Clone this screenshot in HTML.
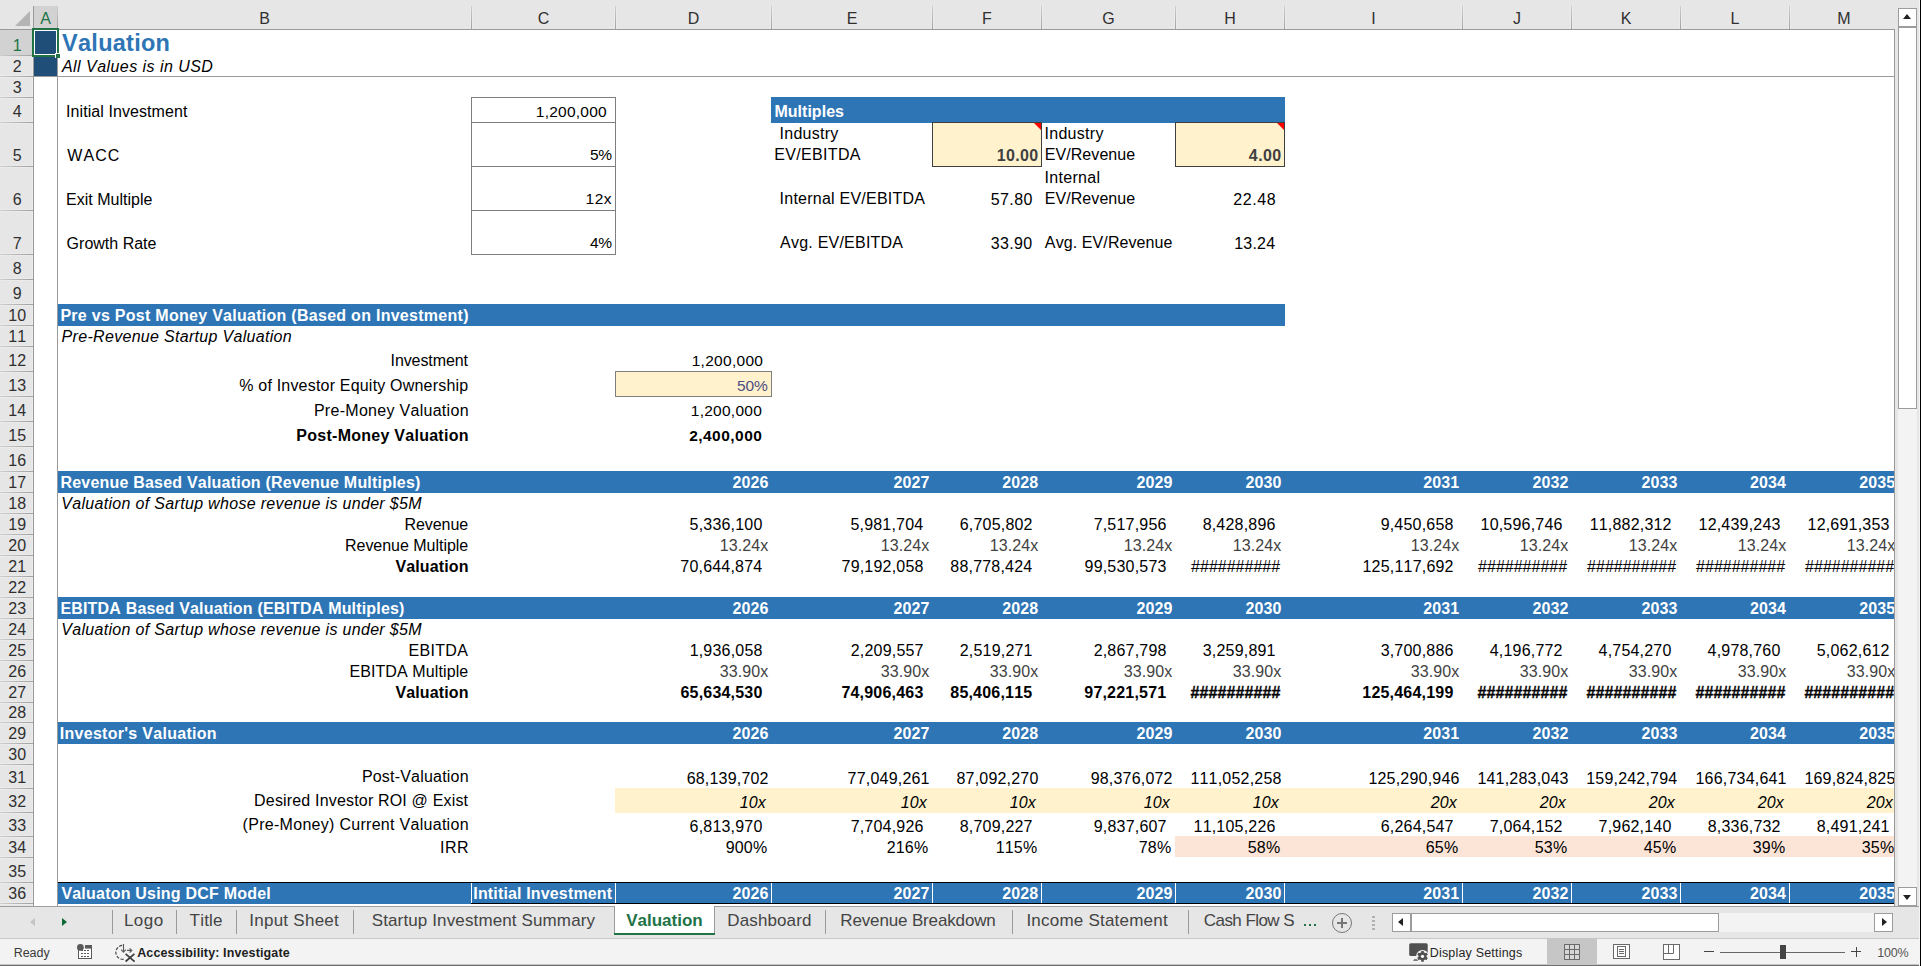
<!DOCTYPE html>
<html><head><meta charset="utf-8"><title>Valuation</title><style>
html,body{margin:0;padding:0}
body{width:1921px;height:966px;position:relative;overflow:hidden;background:#E6E6E6;font-family:"Liberation Sans", sans-serif;}
body div{position:absolute;}
.t{white-space:pre;line-height:20px;height:20px;font-kerning:none;font-variant-ligatures:none;}
</style></head><body>
<div id="sheet" style="left:0;top:0;width:1894px;height:906px;overflow:hidden;background:#fff">
<div style="left:34px;top:30px;width:24px;height:46px;background:#1F4E79;"></div>
<div style="left:771px;top:97px;width:514px;height:26px;background:#2E75B6;"></div>
<div style="left:932px;top:122px;width:110px;height:45px;background:#FFF2CC;"></div>
<div style="left:932px;top:122px;width:110px;height:45px;background:transparent;border:1px solid #3f3f3f;box-sizing:border-box;"></div>
<div style="left:1034px;top:123px;width:0;height:0;border-top:7px solid #FF0000;border-left:7px solid transparent;"></div>
<div style="left:1175px;top:122px;width:110px;height:45px;background:#FFF2CC;"></div>
<div style="left:1175px;top:122px;width:110px;height:45px;background:transparent;border:1px solid #3f3f3f;box-sizing:border-box;"></div>
<div style="left:1277px;top:123px;width:0;height:0;border-top:7px solid #FF0000;border-left:7px solid transparent;"></div>
<div style="left:471px;top:97px;width:145px;height:158px;background:transparent;border:1px solid #7f7f7f;box-sizing:border-box;"></div>
<div style="left:471px;top:122px;width:145px;height:1px;background:#7f7f7f;"></div>
<div style="left:471px;top:166px;width:145px;height:1px;background:#7f7f7f;"></div>
<div style="left:471px;top:210px;width:145px;height:1px;background:#7f7f7f;"></div>
<div style="left:57px;top:304px;width:1228px;height:22px;background:#2E75B6;"></div>
<div style="left:57px;top:471px;width:1842px;height:22px;background:#2E75B6;"></div>
<div style="left:57px;top:597px;width:1842px;height:22px;background:#2E75B6;"></div>
<div style="left:57px;top:722px;width:1842px;height:22px;background:#2E75B6;"></div>
<div style="left:57px;top:882px;width:1842px;height:22px;background:#2E75B6;"></div>
<div style="left:58px;top:882px;width:1836px;height:1px;background:#000;"></div>
<div style="left:471px;top:903px;width:1423px;height:1px;background:#000;"></div>
<div style="left:471px;top:883px;width:1px;height:20px;background:#fff;"></div>
<div style="left:615px;top:883px;width:1px;height:20px;background:#fff;"></div>
<div style="left:771px;top:883px;width:1px;height:20px;background:#fff;"></div>
<div style="left:932px;top:883px;width:1px;height:20px;background:#fff;"></div>
<div style="left:1041px;top:883px;width:1px;height:20px;background:#fff;"></div>
<div style="left:1175px;top:883px;width:1px;height:20px;background:#fff;"></div>
<div style="left:1284px;top:883px;width:1px;height:20px;background:#fff;"></div>
<div style="left:1462px;top:883px;width:1px;height:20px;background:#fff;"></div>
<div style="left:1571px;top:883px;width:1px;height:20px;background:#fff;"></div>
<div style="left:1680px;top:883px;width:1px;height:20px;background:#fff;"></div>
<div style="left:1789px;top:883px;width:1px;height:20px;background:#fff;"></div>
<div style="left:615px;top:371px;width:157px;height:26px;background:#FFF2CC;"></div>
<div style="left:615px;top:371px;width:157px;height:26px;background:transparent;border:1px solid #7f7f7f;box-sizing:border-box;"></div>
<div style="left:615px;top:788px;width:1284px;height:25px;background:#FFF2CC;"></div>
<div style="left:1175px;top:836px;width:719px;height:21px;background:#FCE4D6;"></div>
<div style="left:57px;top:30px;width:1px;height:876px;background:#9b9b9b;"></div>
<div style="left:0px;top:76px;width:1894px;height:1px;background:#9b9b9b;"></div>
<div class="t" style="top:33px;font-size:23.5px;color:#2E75B6;font-weight:bold;letter-spacing:0.263px;left:62.09px;">Valuation</div>
<div class="t" style="top:57px;font-size:16px;font-style:italic;letter-spacing:0.45px;left:61.99px;">All Values is in USD</div>
<div class="t" style="top:102px;font-size:16px;letter-spacing:0.076px;left:66.02px;">Initial Investment</div>
<div class="t" style="top:146px;font-size:16px;letter-spacing:1.032px;left:67.33px;">WACC</div>
<div class="t" style="top:190px;font-size:16px;letter-spacing:0.006px;left:66.09px;">Exit Multiple</div>
<div class="t" style="top:234px;font-size:16px;letter-spacing:0.005px;left:66.6px;">Growth Rate</div>
<div class="t" style="top:102px;font-size:15.5px;letter-spacing:0.241px;left:535.82px;">1,200,000</div>
<div class="t" style="top:145px;font-size:15.5px;letter-spacing:-0.529px;left:590.08px;">5%</div>
<div class="t" style="top:189px;font-size:15.5px;letter-spacing:0.528px;left:585.52px;">12x</div>
<div class="t" style="top:233px;font-size:15.5px;letter-spacing:-0.494px;left:590.04px;">4%</div>
<div class="t" style="top:102px;font-size:16px;color:#fff;font-weight:bold;letter-spacing:0.024px;left:774.43px;">Multiples</div>
<div class="t" style="top:124px;font-size:16px;letter-spacing:0.242px;left:779.62px;">Industry</div>
<div class="t" style="top:145px;font-size:16px;letter-spacing:0.346px;left:774.19px;">EV/EBITDA</div>
<div class="t" style="top:146px;font-size:16px;color:#3f3f3f;font-weight:bold;letter-spacing:0.356px;left:996.79px;">10.00</div>
<div class="t" style="top:124px;font-size:16px;letter-spacing:0.285px;left:1044.52px;">Industry</div>
<div class="t" style="top:145px;font-size:16px;letter-spacing:0.076px;left:1044.69px;">EV/Revenue</div>
<div class="t" style="top:146px;font-size:16px;color:#3f3f3f;font-weight:bold;letter-spacing:0.419px;left:1248.86px;">4.00</div>
<div class="t" style="top:189px;font-size:16px;letter-spacing:0.236px;left:779.62px;">Internal EV/EBITDA</div>
<div class="t" style="top:190px;font-size:16px;letter-spacing:0.407px;left:990.76px;">57.80</div>
<div class="t" style="top:168px;font-size:16px;letter-spacing:0.311px;left:1044.52px;">Internal</div>
<div class="t" style="top:189px;font-size:16px;letter-spacing:0.076px;left:1044.69px;">EV/Revenue</div>
<div class="t" style="top:190px;font-size:16px;letter-spacing:0.59px;left:1233.2px;">22.48</div>
<div class="t" style="top:233px;font-size:16px;letter-spacing:0.225px;left:780.07px;">Avg. EV/EBITDA</div>
<div class="t" style="top:234px;font-size:16px;letter-spacing:0.349px;left:990.79px;">33.90</div>
<div class="t" style="top:233px;font-size:16px;letter-spacing:0.096px;left:1044.87px;">Avg. EV/Revenue</div>
<div class="t" style="top:234px;font-size:16px;letter-spacing:0.212px;left:1234.18px;">13.24</div>
<div class="t" style="top:306px;font-size:16px;color:#fff;font-weight:bold;letter-spacing:0.277px;left:60.43px;">Pre vs Post Money Valuation (Based on Investment)</div>
<div class="t" style="top:327px;font-size:16px;font-style:italic;letter-spacing:0.309px;left:61.61px;">Pre-Revenue Startup Valuation</div>
<div class="t" style="top:351px;font-size:16px;letter-spacing:-0.085px;left:390.52px;">Investment</div>
<div class="t" style="top:351px;font-size:15.5px;letter-spacing:0.279px;left:691.72px;">1,200,000</div>
<div class="t" style="top:376px;font-size:16px;letter-spacing:0.198px;left:239.23px;">% of Investor Equity Ownership</div>
<div class="t" style="top:376px;font-size:15.5px;color:#4e4e82;letter-spacing:-0.125px;left:736.98px;">50%</div>
<div class="t" style="top:401px;font-size:16px;letter-spacing:0.291px;left:313.89px;">Pre-Money Valuation</div>
<div class="t" style="top:401px;font-size:15.5px;letter-spacing:0.254px;left:690.82px;">1,200,000</div>
<div class="t" style="top:426px;font-size:16px;font-weight:bold;letter-spacing:0.265px;left:296.33px;">Post-Money Valuation</div>
<div class="t" style="top:426px;font-size:15.5px;font-weight:bold;letter-spacing:0.465px;left:689.16px;">2,400,000</div>
<div class="t" style="top:473px;font-size:16px;color:#fff;font-weight:bold;letter-spacing:0.209px;left:60.43px;">Revenue Based Valuation (Revenue Multiples)</div>
<div class="t" style="top:473px;font-size:16px;color:#fff;font-weight:bold;letter-spacing:0.1px;right:1125.62px;">2026</div>
<div class="t" style="top:473px;font-size:16px;color:#fff;font-weight:bold;letter-spacing:0.1px;right:964.5px;">2027</div>
<div class="t" style="top:473px;font-size:16px;color:#fff;font-weight:bold;letter-spacing:0.1px;right:855.71px;">2028</div>
<div class="t" style="top:473px;font-size:16px;color:#fff;font-weight:bold;letter-spacing:0.1px;right:721.6099999999999px;">2029</div>
<div class="t" style="top:473px;font-size:16px;color:#fff;font-weight:bold;letter-spacing:0.1px;right:612.54px;">2030</div>
<div class="t" style="top:473px;font-size:16px;color:#fff;font-weight:bold;letter-spacing:0.1px;right:434.75px;">2031</div>
<div class="t" style="top:473px;font-size:16px;color:#fff;font-weight:bold;letter-spacing:0.1px;right:325.55999999999995px;">2032</div>
<div class="t" style="top:473px;font-size:16px;color:#fff;font-weight:bold;letter-spacing:0.1px;right:216.6199999999999px;">2033</div>
<div class="t" style="top:473px;font-size:16px;color:#fff;font-weight:bold;letter-spacing:0.1px;right:108.1099999999999px;">2034</div>
<div class="t" style="top:473px;font-size:16px;color:#fff;font-weight:bold;letter-spacing:0.1px;right:-1.25px;">2035</div>
<div class="t" style="top:494px;font-size:16px;font-style:italic;letter-spacing:0.318px;left:61.22px;">Valuation of Sartup whose revenue is under $5M</div>
<div class="t" style="top:515px;font-size:16px;letter-spacing:-0.054px;left:404.49px;">Revenue</div>
<div class="t" style="top:515px;font-size:16px;letter-spacing:0.2px;right:1131.47px;">5,336,100</div>
<div class="t" style="top:515px;font-size:16px;letter-spacing:0.2px;right:970.63px;">5,981,704</div>
<div class="t" style="top:515px;font-size:16px;letter-spacing:0.2px;right:861.3px;">6,705,802</div>
<div class="t" style="top:515px;font-size:16px;letter-spacing:0.2px;right:727.4000000000001px;">7,517,956</div>
<div class="t" style="top:515px;font-size:16px;letter-spacing:0.2px;right:618.4000000000001px;">8,428,896</div>
<div class="t" style="top:515px;font-size:16px;letter-spacing:0.2px;right:440.4000000000001px;">9,450,658</div>
<div class="t" style="top:515px;font-size:16px;letter-spacing:0.2px;right:331.4000000000001px;">10,596,746</div>
<div class="t" style="top:515px;font-size:16px;letter-spacing:0.2px;right:222.29999999999995px;">11,882,312</div>
<div class="t" style="top:515px;font-size:16px;letter-spacing:0.2px;right:113.40000000000009px;">12,439,243</div>
<div class="t" style="top:515px;font-size:16px;letter-spacing:0.2px;right:4.400000000000091px;">12,691,353</div>
<div class="t" style="top:536px;font-size:16px;letter-spacing:-0.027px;left:344.99px;">Revenue Multiple</div>
<div class="t" style="top:536px;font-size:16px;color:#424242;letter-spacing:0.08px;right:1125.75px;">13.24x</div>
<div class="t" style="top:536px;font-size:16px;color:#424242;letter-spacing:0.08px;right:964.75px;">13.24x</div>
<div class="t" style="top:536px;font-size:16px;color:#424242;letter-spacing:0.08px;right:855.75px;">13.24x</div>
<div class="t" style="top:536px;font-size:16px;color:#424242;letter-spacing:0.08px;right:721.75px;">13.24x</div>
<div class="t" style="top:536px;font-size:16px;color:#424242;letter-spacing:0.08px;right:612.75px;">13.24x</div>
<div class="t" style="top:536px;font-size:16px;color:#424242;letter-spacing:0.08px;right:434.75px;">13.24x</div>
<div class="t" style="top:536px;font-size:16px;color:#424242;letter-spacing:0.08px;right:325.75px;">13.24x</div>
<div class="t" style="top:536px;font-size:16px;color:#424242;letter-spacing:0.08px;right:216.75px;">13.24x</div>
<div class="t" style="top:536px;font-size:16px;color:#424242;letter-spacing:0.08px;right:107.75px;">13.24x</div>
<div class="t" style="top:536px;font-size:16px;color:#424242;letter-spacing:0.08px;right:-1.25px;">13.24x</div>
<div class="t" style="top:557px;font-size:16px;font-weight:bold;letter-spacing:0.137px;left:395.39px;">Valuation</div>
<div class="t" style="top:557px;font-size:16px;letter-spacing:0.2px;right:1131.63px;">70,644,874</div>
<div class="t" style="top:557px;font-size:16px;letter-spacing:0.2px;right:970.4px;">79,192,058</div>
<div class="t" style="top:557px;font-size:16px;letter-spacing:0.2px;right:861.6300000000001px;">88,778,424</div>
<div class="t" style="top:557px;font-size:16px;letter-spacing:0.2px;right:727.4000000000001px;">99,530,573</div>
<div class="t" style="top:557px;font-size:16px;letter-spacing:0px;right:613.9200000000001px;">##########</div>
<div class="t" style="top:557px;font-size:16px;letter-spacing:0.2px;right:440.29999999999995px;">125,117,692</div>
<div class="t" style="top:557px;font-size:16px;letter-spacing:0px;right:326.9200000000001px;">##########</div>
<div class="t" style="top:557px;font-size:16px;letter-spacing:0px;right:217.92000000000007px;">##########</div>
<div class="t" style="top:557px;font-size:16px;letter-spacing:0px;right:108.92000000000007px;">##########</div>
<div class="t" style="top:557px;font-size:16px;letter-spacing:0px;right:-0.07999999999992724px;">##########</div>
<div class="t" style="top:599px;font-size:16px;color:#fff;font-weight:bold;letter-spacing:0.176px;left:60.43px;">EBITDA Based Valuation (EBITDA Multiples)</div>
<div class="t" style="top:599px;font-size:16px;color:#fff;font-weight:bold;letter-spacing:0.1px;right:1125.62px;">2026</div>
<div class="t" style="top:599px;font-size:16px;color:#fff;font-weight:bold;letter-spacing:0.1px;right:964.5px;">2027</div>
<div class="t" style="top:599px;font-size:16px;color:#fff;font-weight:bold;letter-spacing:0.1px;right:855.71px;">2028</div>
<div class="t" style="top:599px;font-size:16px;color:#fff;font-weight:bold;letter-spacing:0.1px;right:721.6099999999999px;">2029</div>
<div class="t" style="top:599px;font-size:16px;color:#fff;font-weight:bold;letter-spacing:0.1px;right:612.54px;">2030</div>
<div class="t" style="top:599px;font-size:16px;color:#fff;font-weight:bold;letter-spacing:0.1px;right:434.75px;">2031</div>
<div class="t" style="top:599px;font-size:16px;color:#fff;font-weight:bold;letter-spacing:0.1px;right:325.55999999999995px;">2032</div>
<div class="t" style="top:599px;font-size:16px;color:#fff;font-weight:bold;letter-spacing:0.1px;right:216.6199999999999px;">2033</div>
<div class="t" style="top:599px;font-size:16px;color:#fff;font-weight:bold;letter-spacing:0.1px;right:108.1099999999999px;">2034</div>
<div class="t" style="top:599px;font-size:16px;color:#fff;font-weight:bold;letter-spacing:0.1px;right:-1.25px;">2035</div>
<div class="t" style="top:620px;font-size:16px;font-style:italic;letter-spacing:0.318px;left:61.22px;">Valuation of Sartup whose revenue is under $5M</div>
<div class="t" style="top:641px;font-size:16px;letter-spacing:0.351px;left:408.39px;">EBITDA</div>
<div class="t" style="top:641px;font-size:16px;letter-spacing:0.2px;right:1131.4px;">1,936,058</div>
<div class="t" style="top:641px;font-size:16px;letter-spacing:0.2px;right:970.3px;">2,209,557</div>
<div class="t" style="top:641px;font-size:16px;letter-spacing:0.2px;right:861.3199999999999px;">2,519,271</div>
<div class="t" style="top:641px;font-size:16px;letter-spacing:0.2px;right:727.4000000000001px;">2,867,798</div>
<div class="t" style="top:641px;font-size:16px;letter-spacing:0.2px;right:618.3199999999999px;">3,259,891</div>
<div class="t" style="top:641px;font-size:16px;letter-spacing:0.2px;right:440.4000000000001px;">3,700,886</div>
<div class="t" style="top:641px;font-size:16px;letter-spacing:0.2px;right:331.29999999999995px;">4,196,772</div>
<div class="t" style="top:641px;font-size:16px;letter-spacing:0.2px;right:222.47000000000003px;">4,754,270</div>
<div class="t" style="top:641px;font-size:16px;letter-spacing:0.2px;right:113.47000000000003px;">4,978,760</div>
<div class="t" style="top:641px;font-size:16px;letter-spacing:0.2px;right:4.2999999999999545px;">5,062,612</div>
<div class="t" style="top:662px;font-size:16px;letter-spacing:0.104px;left:349.39px;">EBITDA Multiple</div>
<div class="t" style="top:662px;font-size:16px;color:#424242;letter-spacing:0.08px;right:1125.75px;">33.90x</div>
<div class="t" style="top:662px;font-size:16px;color:#424242;letter-spacing:0.08px;right:964.75px;">33.90x</div>
<div class="t" style="top:662px;font-size:16px;color:#424242;letter-spacing:0.08px;right:855.75px;">33.90x</div>
<div class="t" style="top:662px;font-size:16px;color:#424242;letter-spacing:0.08px;right:721.75px;">33.90x</div>
<div class="t" style="top:662px;font-size:16px;color:#424242;letter-spacing:0.08px;right:612.75px;">33.90x</div>
<div class="t" style="top:662px;font-size:16px;color:#424242;letter-spacing:0.08px;right:434.75px;">33.90x</div>
<div class="t" style="top:662px;font-size:16px;color:#424242;letter-spacing:0.08px;right:325.75px;">33.90x</div>
<div class="t" style="top:662px;font-size:16px;color:#424242;letter-spacing:0.08px;right:216.75px;">33.90x</div>
<div class="t" style="top:662px;font-size:16px;color:#424242;letter-spacing:0.08px;right:107.75px;">33.90x</div>
<div class="t" style="top:662px;font-size:16px;color:#424242;letter-spacing:0.08px;right:-1.25px;">33.90x</div>
<div class="t" style="top:683px;font-size:16px;font-weight:bold;letter-spacing:0.137px;left:395.39px;">Valuation</div>
<div class="t" style="top:683px;font-size:16px;font-weight:bold;letter-spacing:0.2px;right:1131.44px;">65,634,530</div>
<div class="t" style="top:683px;font-size:16px;font-weight:bold;letter-spacing:0.2px;right:970.52px;">74,906,463</div>
<div class="t" style="top:683px;font-size:16px;font-weight:bold;letter-spacing:0.2px;right:861.6500000000001px;">85,406,115</div>
<div class="t" style="top:683px;font-size:16px;font-weight:bold;letter-spacing:0.2px;right:727.6500000000001px;">97,221,571</div>
<div class="t" style="top:683px;font-size:16px;font-weight:bold;letter-spacing:0.1px;right:613.6400000000001px;-webkit-text-stroke:0.35px #000;">##########</div>
<div class="t" style="top:683px;font-size:16px;font-weight:bold;letter-spacing:0.2px;right:440.51px;">125,464,199</div>
<div class="t" style="top:683px;font-size:16px;font-weight:bold;letter-spacing:0.1px;right:326.6400000000001px;-webkit-text-stroke:0.35px #000;">##########</div>
<div class="t" style="top:683px;font-size:16px;font-weight:bold;letter-spacing:0.1px;right:217.6400000000001px;-webkit-text-stroke:0.35px #000;">##########</div>
<div class="t" style="top:683px;font-size:16px;font-weight:bold;letter-spacing:0.1px;right:108.6400000000001px;-webkit-text-stroke:0.35px #000;">##########</div>
<div class="t" style="top:683px;font-size:16px;font-weight:bold;letter-spacing:0.1px;right:-0.35999999999989996px;-webkit-text-stroke:0.35px #000;">##########</div>
<div class="t" style="top:724px;font-size:16px;color:#fff;font-weight:bold;letter-spacing:0.288px;left:59.73px;">Investor's Valuation</div>
<div class="t" style="top:724px;font-size:16px;color:#fff;font-weight:bold;letter-spacing:0.1px;right:1125.62px;">2026</div>
<div class="t" style="top:724px;font-size:16px;color:#fff;font-weight:bold;letter-spacing:0.1px;right:964.5px;">2027</div>
<div class="t" style="top:724px;font-size:16px;color:#fff;font-weight:bold;letter-spacing:0.1px;right:855.71px;">2028</div>
<div class="t" style="top:724px;font-size:16px;color:#fff;font-weight:bold;letter-spacing:0.1px;right:721.6099999999999px;">2029</div>
<div class="t" style="top:724px;font-size:16px;color:#fff;font-weight:bold;letter-spacing:0.1px;right:612.54px;">2030</div>
<div class="t" style="top:724px;font-size:16px;color:#fff;font-weight:bold;letter-spacing:0.1px;right:434.75px;">2031</div>
<div class="t" style="top:724px;font-size:16px;color:#fff;font-weight:bold;letter-spacing:0.1px;right:325.55999999999995px;">2032</div>
<div class="t" style="top:724px;font-size:16px;color:#fff;font-weight:bold;letter-spacing:0.1px;right:216.6199999999999px;">2033</div>
<div class="t" style="top:724px;font-size:16px;color:#fff;font-weight:bold;letter-spacing:0.1px;right:108.1099999999999px;">2034</div>
<div class="t" style="top:724px;font-size:16px;color:#fff;font-weight:bold;letter-spacing:0.1px;right:-1.25px;">2035</div>
<div class="t" style="top:767px;font-size:16px;letter-spacing:0.199px;left:361.89px;">Post-Valuation</div>
<div class="t" style="top:769px;font-size:16px;letter-spacing:0.2px;right:1125.3px;">68,139,702</div>
<div class="t" style="top:769px;font-size:16px;letter-spacing:0.2px;right:964.32px;">77,049,261</div>
<div class="t" style="top:769px;font-size:16px;letter-spacing:0.2px;right:855.47px;">87,092,270</div>
<div class="t" style="top:769px;font-size:16px;letter-spacing:0.2px;right:721.3px;">98,376,072</div>
<div class="t" style="top:769px;font-size:16px;letter-spacing:0.2px;right:612.4000000000001px;">111,052,258</div>
<div class="t" style="top:769px;font-size:16px;letter-spacing:0.2px;right:434.4000000000001px;">125,290,946</div>
<div class="t" style="top:769px;font-size:16px;letter-spacing:0.2px;right:325.4000000000001px;">141,283,043</div>
<div class="t" style="top:769px;font-size:16px;letter-spacing:0.2px;right:216.6300000000001px;">159,242,794</div>
<div class="t" style="top:769px;font-size:16px;letter-spacing:0.2px;right:107.31999999999994px;">166,734,641</div>
<div class="t" style="top:769px;font-size:16px;letter-spacing:0.2px;right:-1.5699999999999363px;">169,824,825</div>
<div class="t" style="top:791px;font-size:16px;letter-spacing:0.176px;left:254.09px;">Desired Investor ROI @ Exist</div>
<div class="t" style="top:793px;font-size:16px;font-style:italic;letter-spacing:0.2px;right:1127.97px;">10x</div>
<div class="t" style="top:793px;font-size:16px;font-style:italic;letter-spacing:0.2px;right:966.97px;">10x</div>
<div class="t" style="top:793px;font-size:16px;font-style:italic;letter-spacing:0.2px;right:857.97px;">10x</div>
<div class="t" style="top:793px;font-size:16px;font-style:italic;letter-spacing:0.2px;right:723.97px;">10x</div>
<div class="t" style="top:793px;font-size:16px;font-style:italic;letter-spacing:0.2px;right:614.97px;">10x</div>
<div class="t" style="top:793px;font-size:16px;font-style:italic;letter-spacing:0.2px;right:436.97px;">20x</div>
<div class="t" style="top:793px;font-size:16px;font-style:italic;letter-spacing:0.2px;right:327.97px;">20x</div>
<div class="t" style="top:793px;font-size:16px;font-style:italic;letter-spacing:0.2px;right:218.97000000000003px;">20x</div>
<div class="t" style="top:793px;font-size:16px;font-style:italic;letter-spacing:0.2px;right:109.97000000000003px;">20x</div>
<div class="t" style="top:793px;font-size:16px;font-style:italic;letter-spacing:0.2px;right:0.9700000000000273px;">20x</div>
<div class="t" style="top:815px;font-size:16px;letter-spacing:0.288px;left:242.61px;">(Pre-Money) Current Valuation</div>
<div class="t" style="top:817px;font-size:16px;letter-spacing:0.2px;right:1131.47px;">6,813,970</div>
<div class="t" style="top:817px;font-size:16px;letter-spacing:0.2px;right:970.4px;">7,704,926</div>
<div class="t" style="top:817px;font-size:16px;letter-spacing:0.2px;right:861.3px;">8,709,227</div>
<div class="t" style="top:817px;font-size:16px;letter-spacing:0.2px;right:727.3px;">9,837,607</div>
<div class="t" style="top:817px;font-size:16px;letter-spacing:0.2px;right:618.4000000000001px;">11,105,226</div>
<div class="t" style="top:817px;font-size:16px;letter-spacing:0.2px;right:440.29999999999995px;">6,264,547</div>
<div class="t" style="top:817px;font-size:16px;letter-spacing:0.2px;right:331.29999999999995px;">7,064,152</div>
<div class="t" style="top:817px;font-size:16px;letter-spacing:0.2px;right:222.47000000000003px;">7,962,140</div>
<div class="t" style="top:817px;font-size:16px;letter-spacing:0.2px;right:113.29999999999995px;">8,336,732</div>
<div class="t" style="top:817px;font-size:16px;letter-spacing:0.2px;right:4.319999999999936px;">8,491,241</div>
<div class="t" style="top:838px;font-size:16px;letter-spacing:0.582px;left:439.92px;">IRR</div>
<div class="t" style="top:838px;font-size:16px;letter-spacing:0.2px;right:1126.63px;">900%</div>
<div class="t" style="top:838px;font-size:16px;letter-spacing:0.2px;right:965.63px;">216%</div>
<div class="t" style="top:838px;font-size:16px;letter-spacing:0.2px;right:856.6300000000001px;">115%</div>
<div class="t" style="top:838px;font-size:16px;letter-spacing:0.2px;right:722.6300000000001px;">78%</div>
<div class="t" style="top:838px;font-size:16px;letter-spacing:0.2px;right:613.6300000000001px;">58%</div>
<div class="t" style="top:838px;font-size:16px;letter-spacing:0.2px;right:435.6300000000001px;">65%</div>
<div class="t" style="top:838px;font-size:16px;letter-spacing:0.2px;right:326.6300000000001px;">53%</div>
<div class="t" style="top:838px;font-size:16px;letter-spacing:0.2px;right:217.6300000000001px;">45%</div>
<div class="t" style="top:838px;font-size:16px;letter-spacing:0.2px;right:108.63000000000011px;">39%</div>
<div class="t" style="top:838px;font-size:16px;letter-spacing:0.2px;right:-0.36999999999989086px;">35%</div>
<div class="t" style="top:884px;font-size:16px;color:#fff;font-weight:bold;letter-spacing:0.213px;left:61.39px;">Valuaton Using DCF Model</div>
<div class="t" style="top:884px;font-size:16px;color:#fff;font-weight:bold;letter-spacing:0.152px;left:473.33px;">Intitial Investment</div>
<div class="t" style="top:884px;font-size:16px;color:#fff;font-weight:bold;letter-spacing:0.1px;right:1125.62px;">2026</div>
<div class="t" style="top:884px;font-size:16px;color:#fff;font-weight:bold;letter-spacing:0.1px;right:964.5px;">2027</div>
<div class="t" style="top:884px;font-size:16px;color:#fff;font-weight:bold;letter-spacing:0.1px;right:855.71px;">2028</div>
<div class="t" style="top:884px;font-size:16px;color:#fff;font-weight:bold;letter-spacing:0.1px;right:721.6099999999999px;">2029</div>
<div class="t" style="top:884px;font-size:16px;color:#fff;font-weight:bold;letter-spacing:0.1px;right:612.54px;">2030</div>
<div class="t" style="top:884px;font-size:16px;color:#fff;font-weight:bold;letter-spacing:0.1px;right:434.75px;">2031</div>
<div class="t" style="top:884px;font-size:16px;color:#fff;font-weight:bold;letter-spacing:0.1px;right:325.55999999999995px;">2032</div>
<div class="t" style="top:884px;font-size:16px;color:#fff;font-weight:bold;letter-spacing:0.1px;right:216.6199999999999px;">2033</div>
<div class="t" style="top:884px;font-size:16px;color:#fff;font-weight:bold;letter-spacing:0.1px;right:108.1099999999999px;">2034</div>
<div class="t" style="top:884px;font-size:16px;color:#fff;font-weight:bold;letter-spacing:0.1px;right:-1.25px;">2035</div>
<div style="left:32px;top:28px;width:27px;height:29px;background:transparent;border:2px solid #217346;box-sizing:border-box;"></div>
<div style="left:34px;top:30px;width:23px;height:25px;background:transparent;border:1px solid #fff;box-sizing:border-box;"></div>
<div style="left:55px;top:53px;width:5px;height:5px;background:#fff;"></div>
<div style="left:56px;top:54px;width:4px;height:4px;background:#217346;"></div>
</div>
<div style="left:0px;top:0px;width:1895px;height:29px;background:#E6E6E6;"></div>
<div style="left:0px;top:30px;width:33px;height:876px;background:#E6E6E6;"></div>
<div style="left:34px;top:6px;width:23px;height:23px;background:#D2D2D2;"></div>
<div style="left:0px;top:30px;width:33px;height:25px;background:#D2D2D2;"></div>
<div style="left:0px;top:29px;width:1895px;height:1px;background:#9a9a9a;"></div>
<div style="left:1894px;top:29px;width:1px;height:877px;background:#9a9a9a;"></div>
<div style="left:33px;top:6px;width:1px;height:900px;background:#9a9a9a;"></div>
<div style="left:57px;top:6px;width:1px;height:23px;background:linear-gradient(#cdcdcd,#a2a2a2);"></div>
<div style="left:470px;top:6px;width:3px;height:23px;background:#ebebeb;"></div>
<div style="left:471px;top:6px;width:1px;height:23px;background:linear-gradient(#cdcdcd,#a2a2a2);"></div>
<div style="left:614px;top:6px;width:3px;height:23px;background:#ebebeb;"></div>
<div style="left:615px;top:6px;width:1px;height:23px;background:linear-gradient(#cdcdcd,#a2a2a2);"></div>
<div style="left:770px;top:6px;width:3px;height:23px;background:#ebebeb;"></div>
<div style="left:771px;top:6px;width:1px;height:23px;background:linear-gradient(#cdcdcd,#a2a2a2);"></div>
<div style="left:931px;top:6px;width:3px;height:23px;background:#ebebeb;"></div>
<div style="left:932px;top:6px;width:1px;height:23px;background:linear-gradient(#cdcdcd,#a2a2a2);"></div>
<div style="left:1040px;top:6px;width:3px;height:23px;background:#ebebeb;"></div>
<div style="left:1041px;top:6px;width:1px;height:23px;background:linear-gradient(#cdcdcd,#a2a2a2);"></div>
<div style="left:1174px;top:6px;width:3px;height:23px;background:#ebebeb;"></div>
<div style="left:1175px;top:6px;width:1px;height:23px;background:linear-gradient(#cdcdcd,#a2a2a2);"></div>
<div style="left:1283px;top:6px;width:3px;height:23px;background:#ebebeb;"></div>
<div style="left:1284px;top:6px;width:1px;height:23px;background:linear-gradient(#cdcdcd,#a2a2a2);"></div>
<div style="left:1461px;top:6px;width:3px;height:23px;background:#ebebeb;"></div>
<div style="left:1462px;top:6px;width:1px;height:23px;background:linear-gradient(#cdcdcd,#a2a2a2);"></div>
<div style="left:1570px;top:6px;width:3px;height:23px;background:#ebebeb;"></div>
<div style="left:1571px;top:6px;width:1px;height:23px;background:linear-gradient(#cdcdcd,#a2a2a2);"></div>
<div style="left:1679px;top:6px;width:3px;height:23px;background:#ebebeb;"></div>
<div style="left:1680px;top:6px;width:1px;height:23px;background:linear-gradient(#cdcdcd,#a2a2a2);"></div>
<div style="left:1788px;top:6px;width:3px;height:23px;background:#ebebeb;"></div>
<div style="left:1789px;top:6px;width:1px;height:23px;background:linear-gradient(#cdcdcd,#a2a2a2);"></div>
<div style="left:32px;top:30px;width:1px;height:876px;background:#ebebeb;"></div>
<div style="left:0px;top:55px;width:33px;height:1px;background:linear-gradient(to right,#cdcdcd,#a0a0a0);"></div>
<div style="left:0px;top:75px;width:33px;height:3px;background:#ebebeb;"></div>
<div style="left:0px;top:76px;width:33px;height:1px;background:linear-gradient(to right,#cdcdcd,#a0a0a0);"></div>
<div style="left:0px;top:96px;width:33px;height:3px;background:#ebebeb;"></div>
<div style="left:0px;top:97px;width:33px;height:1px;background:linear-gradient(to right,#cdcdcd,#a0a0a0);"></div>
<div style="left:0px;top:121px;width:33px;height:3px;background:#ebebeb;"></div>
<div style="left:0px;top:122px;width:33px;height:1px;background:linear-gradient(to right,#cdcdcd,#a0a0a0);"></div>
<div style="left:0px;top:165px;width:33px;height:3px;background:#ebebeb;"></div>
<div style="left:0px;top:166px;width:33px;height:1px;background:linear-gradient(to right,#cdcdcd,#a0a0a0);"></div>
<div style="left:0px;top:209px;width:33px;height:3px;background:#ebebeb;"></div>
<div style="left:0px;top:210px;width:33px;height:1px;background:linear-gradient(to right,#cdcdcd,#a0a0a0);"></div>
<div style="left:0px;top:253px;width:33px;height:3px;background:#ebebeb;"></div>
<div style="left:0px;top:254px;width:33px;height:1px;background:linear-gradient(to right,#cdcdcd,#a0a0a0);"></div>
<div style="left:0px;top:278px;width:33px;height:3px;background:#ebebeb;"></div>
<div style="left:0px;top:279px;width:33px;height:1px;background:linear-gradient(to right,#cdcdcd,#a0a0a0);"></div>
<div style="left:0px;top:303px;width:33px;height:3px;background:#ebebeb;"></div>
<div style="left:0px;top:304px;width:33px;height:1px;background:linear-gradient(to right,#cdcdcd,#a0a0a0);"></div>
<div style="left:0px;top:324px;width:33px;height:3px;background:#ebebeb;"></div>
<div style="left:0px;top:325px;width:33px;height:1px;background:linear-gradient(to right,#cdcdcd,#a0a0a0);"></div>
<div style="left:0px;top:345px;width:33px;height:3px;background:#ebebeb;"></div>
<div style="left:0px;top:346px;width:33px;height:1px;background:linear-gradient(to right,#cdcdcd,#a0a0a0);"></div>
<div style="left:0px;top:370px;width:33px;height:3px;background:#ebebeb;"></div>
<div style="left:0px;top:371px;width:33px;height:1px;background:linear-gradient(to right,#cdcdcd,#a0a0a0);"></div>
<div style="left:0px;top:395px;width:33px;height:3px;background:#ebebeb;"></div>
<div style="left:0px;top:396px;width:33px;height:1px;background:linear-gradient(to right,#cdcdcd,#a0a0a0);"></div>
<div style="left:0px;top:420px;width:33px;height:3px;background:#ebebeb;"></div>
<div style="left:0px;top:421px;width:33px;height:1px;background:linear-gradient(to right,#cdcdcd,#a0a0a0);"></div>
<div style="left:0px;top:445px;width:33px;height:3px;background:#ebebeb;"></div>
<div style="left:0px;top:446px;width:33px;height:1px;background:linear-gradient(to right,#cdcdcd,#a0a0a0);"></div>
<div style="left:0px;top:470px;width:33px;height:3px;background:#ebebeb;"></div>
<div style="left:0px;top:471px;width:33px;height:1px;background:linear-gradient(to right,#cdcdcd,#a0a0a0);"></div>
<div style="left:0px;top:491px;width:33px;height:3px;background:#ebebeb;"></div>
<div style="left:0px;top:492px;width:33px;height:1px;background:linear-gradient(to right,#cdcdcd,#a0a0a0);"></div>
<div style="left:0px;top:512px;width:33px;height:3px;background:#ebebeb;"></div>
<div style="left:0px;top:513px;width:33px;height:1px;background:linear-gradient(to right,#cdcdcd,#a0a0a0);"></div>
<div style="left:0px;top:533px;width:33px;height:3px;background:#ebebeb;"></div>
<div style="left:0px;top:534px;width:33px;height:1px;background:linear-gradient(to right,#cdcdcd,#a0a0a0);"></div>
<div style="left:0px;top:554px;width:33px;height:3px;background:#ebebeb;"></div>
<div style="left:0px;top:555px;width:33px;height:1px;background:linear-gradient(to right,#cdcdcd,#a0a0a0);"></div>
<div style="left:0px;top:575px;width:33px;height:3px;background:#ebebeb;"></div>
<div style="left:0px;top:576px;width:33px;height:1px;background:linear-gradient(to right,#cdcdcd,#a0a0a0);"></div>
<div style="left:0px;top:596px;width:33px;height:3px;background:#ebebeb;"></div>
<div style="left:0px;top:597px;width:33px;height:1px;background:linear-gradient(to right,#cdcdcd,#a0a0a0);"></div>
<div style="left:0px;top:617px;width:33px;height:3px;background:#ebebeb;"></div>
<div style="left:0px;top:618px;width:33px;height:1px;background:linear-gradient(to right,#cdcdcd,#a0a0a0);"></div>
<div style="left:0px;top:638px;width:33px;height:3px;background:#ebebeb;"></div>
<div style="left:0px;top:639px;width:33px;height:1px;background:linear-gradient(to right,#cdcdcd,#a0a0a0);"></div>
<div style="left:0px;top:659px;width:33px;height:3px;background:#ebebeb;"></div>
<div style="left:0px;top:660px;width:33px;height:1px;background:linear-gradient(to right,#cdcdcd,#a0a0a0);"></div>
<div style="left:0px;top:680px;width:33px;height:3px;background:#ebebeb;"></div>
<div style="left:0px;top:681px;width:33px;height:1px;background:linear-gradient(to right,#cdcdcd,#a0a0a0);"></div>
<div style="left:0px;top:701px;width:33px;height:3px;background:#ebebeb;"></div>
<div style="left:0px;top:702px;width:33px;height:1px;background:linear-gradient(to right,#cdcdcd,#a0a0a0);"></div>
<div style="left:0px;top:721px;width:33px;height:3px;background:#ebebeb;"></div>
<div style="left:0px;top:722px;width:33px;height:1px;background:linear-gradient(to right,#cdcdcd,#a0a0a0);"></div>
<div style="left:0px;top:742px;width:33px;height:3px;background:#ebebeb;"></div>
<div style="left:0px;top:743px;width:33px;height:1px;background:linear-gradient(to right,#cdcdcd,#a0a0a0);"></div>
<div style="left:0px;top:763px;width:33px;height:3px;background:#ebebeb;"></div>
<div style="left:0px;top:764px;width:33px;height:1px;background:linear-gradient(to right,#cdcdcd,#a0a0a0);"></div>
<div style="left:0px;top:787px;width:33px;height:3px;background:#ebebeb;"></div>
<div style="left:0px;top:788px;width:33px;height:1px;background:linear-gradient(to right,#cdcdcd,#a0a0a0);"></div>
<div style="left:0px;top:811px;width:33px;height:3px;background:#ebebeb;"></div>
<div style="left:0px;top:812px;width:33px;height:1px;background:linear-gradient(to right,#cdcdcd,#a0a0a0);"></div>
<div style="left:0px;top:835px;width:33px;height:3px;background:#ebebeb;"></div>
<div style="left:0px;top:836px;width:33px;height:1px;background:linear-gradient(to right,#cdcdcd,#a0a0a0);"></div>
<div style="left:0px;top:856px;width:33px;height:3px;background:#ebebeb;"></div>
<div style="left:0px;top:857px;width:33px;height:1px;background:linear-gradient(to right,#cdcdcd,#a0a0a0);"></div>
<div style="left:0px;top:881px;width:33px;height:3px;background:#ebebeb;"></div>
<div style="left:0px;top:882px;width:33px;height:1px;background:linear-gradient(to right,#cdcdcd,#a0a0a0);"></div>
<div style="left:0px;top:902px;width:33px;height:3px;background:#ebebeb;"></div>
<div style="left:0px;top:903px;width:33px;height:1px;background:linear-gradient(to right,#cdcdcd,#a0a0a0);"></div>
<div style="left:15px;top:11px;width:0;height:0;border-bottom:15px solid #b4b4b4;border-left:15px solid transparent;"></div>
<div class="t" style="top:9px;font-size:16px;color:#217346;left:-154.5px;width:400px;text-align:center;">A</div>
<div class="t" style="top:9px;font-size:16px;color:#303030;left:64.5px;width:400px;text-align:center;">B</div>
<div class="t" style="top:9px;font-size:16px;color:#303030;left:343.5px;width:400px;text-align:center;">C</div>
<div class="t" style="top:9px;font-size:16px;color:#303030;left:493.5px;width:400px;text-align:center;">D</div>
<div class="t" style="top:9px;font-size:16px;color:#303030;left:652.0px;width:400px;text-align:center;">E</div>
<div class="t" style="top:9px;font-size:16px;color:#303030;left:787.0px;width:400px;text-align:center;">F</div>
<div class="t" style="top:9px;font-size:16px;color:#303030;left:908.5px;width:400px;text-align:center;">G</div>
<div class="t" style="top:9px;font-size:16px;color:#303030;left:1030.0px;width:400px;text-align:center;">H</div>
<div class="t" style="top:9px;font-size:16px;color:#303030;left:1173.5px;width:400px;text-align:center;">I</div>
<div class="t" style="top:9px;font-size:16px;color:#303030;left:1317.0px;width:400px;text-align:center;">J</div>
<div class="t" style="top:9px;font-size:16px;color:#303030;left:1426.0px;width:400px;text-align:center;">K</div>
<div class="t" style="top:9px;font-size:16px;color:#303030;left:1535.0px;width:400px;text-align:center;">L</div>
<div class="t" style="top:9px;font-size:16px;color:#303030;left:1644px;width:400px;text-align:center;">M</div>
<div class="t" style="top:36px;font-size:16px;color:#217346;left:-182.8px;width:400px;text-align:center;">1</div>
<div class="t" style="top:57px;font-size:16px;color:#303030;left:-182.8px;width:400px;text-align:center;">2</div>
<div class="t" style="top:78px;font-size:16px;color:#303030;left:-182.8px;width:400px;text-align:center;">3</div>
<div class="t" style="top:102px;font-size:16px;color:#303030;left:-182.8px;width:400px;text-align:center;">4</div>
<div class="t" style="top:146px;font-size:16px;color:#303030;left:-182.8px;width:400px;text-align:center;">5</div>
<div class="t" style="top:190px;font-size:16px;color:#303030;left:-182.8px;width:400px;text-align:center;">6</div>
<div class="t" style="top:234px;font-size:16px;color:#303030;left:-182.8px;width:400px;text-align:center;">7</div>
<div class="t" style="top:259px;font-size:16px;color:#303030;left:-182.8px;width:400px;text-align:center;">8</div>
<div class="t" style="top:284px;font-size:16px;color:#303030;left:-182.8px;width:400px;text-align:center;">9</div>
<div class="t" style="top:306px;font-size:16px;color:#303030;left:-182.8px;width:400px;text-align:center;">10</div>
<div class="t" style="top:327px;font-size:16px;color:#303030;left:-182.8px;width:400px;text-align:center;">11</div>
<div class="t" style="top:351px;font-size:16px;color:#303030;left:-182.8px;width:400px;text-align:center;">12</div>
<div class="t" style="top:376px;font-size:16px;color:#303030;left:-182.8px;width:400px;text-align:center;">13</div>
<div class="t" style="top:401px;font-size:16px;color:#303030;left:-182.8px;width:400px;text-align:center;">14</div>
<div class="t" style="top:426px;font-size:16px;color:#303030;left:-182.8px;width:400px;text-align:center;">15</div>
<div class="t" style="top:451px;font-size:16px;color:#303030;left:-182.8px;width:400px;text-align:center;">16</div>
<div class="t" style="top:473px;font-size:16px;color:#303030;left:-182.8px;width:400px;text-align:center;">17</div>
<div class="t" style="top:494px;font-size:16px;color:#303030;left:-182.8px;width:400px;text-align:center;">18</div>
<div class="t" style="top:515px;font-size:16px;color:#303030;left:-182.8px;width:400px;text-align:center;">19</div>
<div class="t" style="top:536px;font-size:16px;color:#303030;left:-182.8px;width:400px;text-align:center;">20</div>
<div class="t" style="top:557px;font-size:16px;color:#303030;left:-182.8px;width:400px;text-align:center;">21</div>
<div class="t" style="top:578px;font-size:16px;color:#303030;left:-182.8px;width:400px;text-align:center;">22</div>
<div class="t" style="top:599px;font-size:16px;color:#303030;left:-182.8px;width:400px;text-align:center;">23</div>
<div class="t" style="top:620px;font-size:16px;color:#303030;left:-182.8px;width:400px;text-align:center;">24</div>
<div class="t" style="top:641px;font-size:16px;color:#303030;left:-182.8px;width:400px;text-align:center;">25</div>
<div class="t" style="top:662px;font-size:16px;color:#303030;left:-182.8px;width:400px;text-align:center;">26</div>
<div class="t" style="top:683px;font-size:16px;color:#303030;left:-182.8px;width:400px;text-align:center;">27</div>
<div class="t" style="top:703px;font-size:16px;color:#303030;left:-182.8px;width:400px;text-align:center;">28</div>
<div class="t" style="top:724px;font-size:16px;color:#303030;left:-182.8px;width:400px;text-align:center;">29</div>
<div class="t" style="top:745px;font-size:16px;color:#303030;left:-182.8px;width:400px;text-align:center;">30</div>
<div class="t" style="top:768px;font-size:16px;color:#303030;left:-182.8px;width:400px;text-align:center;">31</div>
<div class="t" style="top:792px;font-size:16px;color:#303030;left:-182.8px;width:400px;text-align:center;">32</div>
<div class="t" style="top:816px;font-size:16px;color:#303030;left:-182.8px;width:400px;text-align:center;">33</div>
<div class="t" style="top:838px;font-size:16px;color:#303030;left:-182.8px;width:400px;text-align:center;">34</div>
<div class="t" style="top:862px;font-size:16px;color:#303030;left:-182.8px;width:400px;text-align:center;">35</div>
<div class="t" style="top:884px;font-size:16px;color:#303030;left:-182.8px;width:400px;text-align:center;">36</div>
<div style="left:32px;top:28px;width:27px;height:2px;background:#217346;"></div>
<div style="left:32px;top:28px;width:2px;height:29px;background:#217346;"></div>
<div style="left:1898px;top:8px;width:19px;height:19px;background:#fff;border:1px solid #9c9c9c;box-sizing:border-box;"></div>
<div style="left:1903px;top:14px;width:0;height:0;border-bottom:5px solid #222;border-left:4.5px solid transparent;border-right:4.5px solid transparent;"></div>
<div style="left:1898px;top:27px;width:19px;height:382px;background:#fff;border:1px solid #9c9c9c;box-sizing:border-box;"></div>
<div style="left:1898px;top:409px;width:19px;height:478px;background:#f3f3f3;"></div>
<div style="left:1898px;top:887px;width:19px;height:19px;background:#fff;border:1px solid #9c9c9c;box-sizing:border-box;"></div>
<div style="left:1903px;top:895px;width:0;height:0;border-top:5px solid #222;border-left:4.5px solid transparent;border-right:4.5px solid transparent;"></div>
<div style="left:1919px;top:0px;width:1px;height:966px;background:#f4f4f4;"></div>
<div style="left:1920px;top:0px;width:1px;height:966px;background:#000;"></div>
<div style="left:0px;top:906px;width:1919px;height:1px;background:#9e9e9e;"></div>
<div style="left:0px;top:938px;width:1919px;height:1px;background:#c8c8c8;"></div>
<div style="left:0px;top:939px;width:1919px;height:26px;background:#f3f3f3;"></div>
<div style="left:0px;top:964px;width:1919px;height:1px;background:#c4c4c4;"></div>
<div style="left:0px;top:965px;width:1919px;height:1px;background:#6e6e6e;"></div>
<div style="left:30px;top:918px;width:0;height:0;border-right:5px solid #c4c4c4;border-top:4.5px solid transparent;border-bottom:4.5px solid transparent;"></div>
<div style="left:62px;top:918px;width:0;height:0;border-left:5px solid #0f6a35;border-top:4.5px solid transparent;border-bottom:4.5px solid transparent;"></div>
<div style="left:112px;top:910px;width:1px;height:24px;background:#9a9a9a;"></div>
<div style="left:176px;top:910px;width:1px;height:24px;background:#9a9a9a;"></div>
<div style="left:236px;top:910px;width:1px;height:24px;background:#9a9a9a;"></div>
<div style="left:353px;top:910px;width:1px;height:24px;background:#9a9a9a;"></div>
<div style="left:825px;top:910px;width:1px;height:24px;background:#9a9a9a;"></div>
<div style="left:1012px;top:910px;width:1px;height:24px;background:#9a9a9a;"></div>
<div style="left:1188px;top:910px;width:1px;height:24px;background:#9a9a9a;"></div>
<div class="t" style="top:911px;font-size:17px;color:#444;letter-spacing:0.497px;left:123.91px;">Logo</div>
<div class="t" style="top:911px;font-size:17px;color:#444;letter-spacing:0.18px;left:189.62px;">Title</div>
<div class="t" style="top:911px;font-size:17px;color:#444;letter-spacing:0.263px;left:249.23px;">Input Sheet</div>
<div class="t" style="top:911px;font-size:17px;color:#444;letter-spacing:0.127px;left:371.73px;">Startup Investment Summary</div>
<div style="left:614px;top:906px;width:101px;height:28px;background:#fff;border-left:1px solid #9a9a9a;border-right:1px solid #9a9a9a;box-sizing:border-box;"></div>
<div style="left:614px;top:933px;width:101px;height:2px;background:#217346;"></div>
<div class="t" style="top:911px;font-size:17px;color:#217346;font-weight:bold;letter-spacing:0.008px;left:626.18px;">Valuation</div>
<div class="t" style="top:911px;font-size:17px;color:#444;letter-spacing:0.116px;left:727.31px;">Dashboard</div>
<div class="t" style="top:911px;font-size:17px;color:#444;letter-spacing:-0.145px;left:840.31px;">Revenue Breakdown</div>
<div class="t" style="top:911px;font-size:17px;color:#444;letter-spacing:0.216px;left:1026.43px;">Income Statement</div>
<div class="t" style="top:911px;font-size:17px;color:#444;letter-spacing:-0.572px;left:1203.84px;">Cash Flow S</div>
<div style="left:1304px;top:924px;width:2px;height:2px;background:#217346;"></div>
<div style="left:1309px;top:924px;width:2px;height:2px;background:#217346;"></div>
<div style="left:1314px;top:924px;width:2px;height:2px;background:#217346;"></div>
<div style="left:1332px;top:913px;width:20px;height:20px;border:1.5px solid #777;border-radius:50%;box-sizing:border-box;"></div>
<div style="left:1337px;top:922px;width:10px;height:1.5px;background:#777;"></div>
<div style="left:1341.25px;top:918px;width:1.5px;height:10px;background:#777;"></div>
<div style="left:1372px;top:916px;width:3px;height:2px;background:#b0b0b0;"></div>
<div style="left:1372px;top:920px;width:3px;height:2px;background:#b0b0b0;"></div>
<div style="left:1372px;top:924px;width:3px;height:2px;background:#b0b0b0;"></div>
<div style="left:1372px;top:928px;width:3px;height:2px;background:#b0b0b0;"></div>
<div style="left:1392px;top:913px;width:19px;height:19px;background:#fff;border:1px solid #9c9c9c;box-sizing:border-box;"></div>
<div style="left:1398px;top:918px;width:0;height:0;border-right:5px solid #222;border-top:4.5px solid transparent;border-bottom:4.5px solid transparent;"></div>
<div style="left:1411px;top:913px;width:308px;height:19px;background:#fff;border:1px solid #9c9c9c;box-sizing:border-box;"></div>
<div style="left:1719px;top:913px;width:155px;height:19px;background:#f3f3f3;"></div>
<div style="left:1874px;top:913px;width:19px;height:19px;background:#fff;border:1px solid #9c9c9c;box-sizing:border-box;"></div>
<div style="left:1882px;top:918px;width:0;height:0;border-left:5px solid #222;border-top:4.5px solid transparent;border-bottom:4.5px solid transparent;"></div>
<div class="t" style="top:943px;font-size:12.5px;color:#3a3a3a;letter-spacing:-0.021px;left:13.67px;">Ready</div>
<div class="t" style="top:943px;font-size:12.5px;color:#1e1e1e;font-weight:bold;letter-spacing:0.123px;left:137.19px;">Accessibility: Investigate</div>
<div class="t" style="top:943px;font-size:12.5px;color:#262626;letter-spacing:0.184px;left:1429.77px;">Display Settings</div>
<div class="t" style="top:943px;font-size:12.5px;color:#555;letter-spacing:-0.191px;left:1877.3px;">100%</div>
<div style="left:1547px;top:938px;width:50px;height:27px;background:#c6c6c6;"></div>
<div style="left:1704px;top:951px;width:10px;height:1px;background:#444;"></div>
<div style="left:1720px;top:952px;width:125px;height:1px;background:#666;"></div>
<div style="left:1780px;top:945px;width:6px;height:14px;background:#444;"></div>
<div style="left:1851px;top:951px;width:10px;height:1px;background:#444;"></div>
<div style="left:1855.5px;top:947px;width:1px;height:10px;background:#444;"></div>
<svg style="position:absolute;left:76px;top:943px" width="18" height="18" viewBox="0 0 18 18"><rect x="2.5" y="2.5" width="13" height="13" fill="#fff" stroke="#5a5a5a" stroke-width="1"/><rect x="9" y="2" width="7" height="3.6" fill="#5a5a5a"/><rect x="2" y="2" width="7" height="4" fill="#f3f3f3"/><rect x="2" y="5.6" width="1" height="1" fill="#5a5a5a"/><circle cx="4.4" cy="4.4" r="3.4" fill="#5a5a5a"/><rect x="5" y="7" width="2" height="1" fill="#5a5a5a"/><rect x="8" y="7" width="2" height="1" fill="#5a5a5a"/><rect x="11" y="7" width="2" height="1" fill="#5a5a5a"/><rect x="5" y="10" width="2" height="1" fill="#5a5a5a"/><rect x="8" y="10" width="2" height="1" fill="#5a5a5a"/><rect x="11" y="10" width="2" height="1" fill="#5a5a5a"/><rect x="5" y="13" width="2" height="1" fill="#5a5a5a"/><rect x="8" y="13" width="2" height="1" fill="#5a5a5a"/><rect x="11" y="13" width="2" height="1" fill="#5a5a5a"/></svg>
<svg style="position:absolute;left:114px;top:942px" width="24" height="22" viewBox="0 0 24 22"><path d="M8.2 3.4 A7 7 0 0 0 9.6 17.4" fill="none" stroke="#4a4a4a" stroke-width="1.2" stroke-dasharray="3.2 1.5"/><path d="M9.5 2 V10 M7.2 7.7 L9.5 10.2 L11.8 7.7" fill="none" stroke="#5a5a5a" stroke-width="1.1"/><path d="M13 8.4 H17.6 M15.6 6.3 L17.8 8.4 L15.6 10.5" fill="none" stroke="#5a5a5a" stroke-width="1.1"/><path d="M11.6 11.8 L20.6 19.6 M20.4 11.9 L11.6 19.5" fill="none" stroke="#3c3c3c" stroke-width="1.7"/></svg>
<svg style="position:absolute;left:1407px;top:941px" width="24" height="22" viewBox="0 0 24 22"><rect x="2.2" y="2.2" width="18.5" height="12.7" rx="1.5" fill="#505050"/><path d="M6 19.7 L7.5 18.2 H11 V19.7 Z" fill="#505050"/><circle cx="15.5" cy="15.3" r="6.3" fill="#f3f3f3"/><g transform="translate(15.5 15.3)"><rect x="-1.3" y="-5.4" width="2.6" height="10.8" rx="0.5" transform="rotate(0)" fill="#505050"/><rect x="-1.3" y="-5.4" width="2.6" height="10.8" rx="0.5" transform="rotate(60)" fill="#505050"/><rect x="-1.3" y="-5.4" width="2.6" height="10.8" rx="0.5" transform="rotate(120)" fill="#505050"/><circle r="4" fill="#505050"/><circle r="1.6" fill="#fff"/></g></svg>
<svg style="position:absolute;left:1564px;top:944px" width="16" height="16" viewBox="0 0 16 16"><rect x="0" y="0" width="16" height="16" fill="#d6d6d6"/><rect x="0" y="0" width="1" height="16" fill="#6a6a6a"/><rect x="0" y="0" width="16" height="1" fill="#6a6a6a"/><rect x="5" y="0" width="1" height="16" fill="#6a6a6a"/><rect x="0" y="5" width="16" height="1" fill="#6a6a6a"/><rect x="10" y="0" width="1" height="16" fill="#6a6a6a"/><rect x="0" y="10" width="16" height="1" fill="#6a6a6a"/><rect x="15" y="0" width="1" height="16" fill="#6a6a6a"/><rect x="0" y="15" width="16" height="1" fill="#6a6a6a"/></svg>
<svg style="position:absolute;left:1613px;top:944px" width="17" height="15" viewBox="0 0 17 15"><rect x="0.5" y="0.5" width="16" height="14" fill="#fff" stroke="#6a6a6a"/><rect x="4.5" y="2.5" width="8" height="10" fill="#fff" stroke="#6a6a6a"/><rect x="6" y="5" width="5" height="1" fill="#6a6a6a"/><rect x="6" y="7" width="5" height="1" fill="#6a6a6a"/><rect x="6" y="9" width="5" height="1" fill="#6a6a6a"/></svg>
<svg style="position:absolute;left:1663px;top:944px" width="17" height="16" viewBox="0 0 17 16"><rect x="0.5" y="0.5" width="16" height="15" fill="#fff" stroke="#6a6a6a"/><path d="M5.5 0.5 V9.5 M10.5 0.5 V9.5 M0.5 9.5 H10.5" fill="none" stroke="#6a6a6a"/></svg>
</body></html>
